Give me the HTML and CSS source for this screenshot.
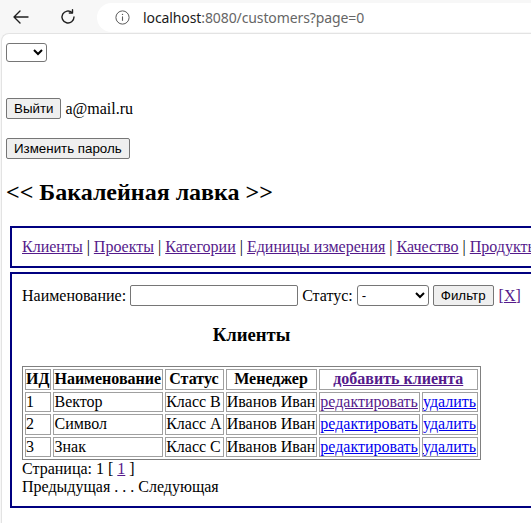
FILE: index.html
```html
<!DOCTYPE html>
<html lang="ru">
<head>
<meta charset="utf-8">
<title>Клиенты</title>
<link rel="stylesheet" href="styles.css">
</head>
<body>
<div class="chrome">
  <svg class="ic back" width="18" height="16" viewBox="0 0 18 16"><path d="M16 8H2M8 2L2 8l6 6" fill="none" stroke="#1f1f1f" stroke-width="1.4" stroke-linecap="round" stroke-linejoin="round"/></svg>
  <svg class="ic reload" width="18" height="18" viewBox="0 0 18 18"><path d="M15 9a6 6 0 1 1-2-4.5" fill="none" stroke="#1f1f1f" stroke-width="1.4" stroke-linecap="round"/><path d="M13.5 1.8v3.2h-3.2" fill="none" stroke="#1f1f1f" stroke-width="1.4" stroke-linecap="round" stroke-linejoin="round"/></svg>
  <div class="omnibox">
    <svg class="info" width="15" height="15" viewBox="0 0 15 15"><circle cx="7.5" cy="7.5" r="6.6" fill="none" stroke="#5b5b5b" stroke-width="1"/><path d="M7.5 6.4v4.4" stroke="#5b5b5b" stroke-width="1.1"/><circle cx="7.5" cy="4.4" r="0.7" fill="#5b5b5b"/></svg>
    <span class="url"><span class="host">localhost</span>:8080/customers?page=0</span>
  </div>
</div>
<div class="page">
  <select class="lang"><option></option></select>
  <div class="auth"><button class="btn">Выйти</button> <span>a@mail.ru</span></div>
  <div class="pwd"><button class="btn">Изменить пароль</button></div>
  <h2 class="title">&lt;&lt; Бакалейная лавка &gt;&gt;</h2>
  <div class="box nav">
    <a href="#" class="v">Клиенты</a> | <a href="#" class="v">Проекты</a> | <a href="#" class="v">Категории</a> | <a href="#" class="v">Единицы измерения</a> | <a href="#" class="v">Качество</a> | <a href="#" class="v">Продукты</a> | <a href="#" class="v">Заказы</a>
  </div>
  <div class="box main">
    <form class="filter">
      <label>Наименование:</label>
      <input type="text" class="name-in">
      <label>Статус:</label>
      <select class="status"><option>-</option></select>
      <button type="button" class="btn">Фильтр</button>
      <a href="#" class="v">[X]</a>
    </form>
    <table class="grid">
      <caption>Клиенты</caption>
      <tr>
        <th>ИД</th><th>Наименование</th><th>Статус</th><th>Менеджер</th><th colspan="2"><a href="#" class="v">добавить клиента</a></th>
      </tr>
      <tr><td>1</td><td>Вектор</td><td>Класс B</td><td>Иванов Иван</td><td><a href="#" class="v">редактировать</a></td><td><a href="#">удалить</a></td></tr>
      <tr><td>2</td><td>Символ</td><td>Класс A</td><td>Иванов Иван</td><td><a href="#">редактировать</a></td><td><a href="#">удалить</a></td></tr>
      <tr><td>3</td><td>Знак</td><td>Класс C</td><td>Иванов Иван</td><td><a href="#">редактировать</a></td><td><a href="#">удалить</a></td></tr>
    </table>
    <div class="pager">Страница: 1 [ <a href="#" class="v">1</a> ]</div>
    <div class="pager">Предыдущая . . . Следующая</div>
  </div>
</div>
</body>
</html>
```

FILE: styles.css
```css
html, body {
  margin: 0;
  padding: 0;
  overflow: hidden;
  background: #f7f7f7;
}
body {
  width: 531px;
  height: 523px;
  font-family: "Liberation Serif", "Times New Roman", serif;
  font-size: 16px;
  color: #000;
}
.chrome {
  height: 33px;
  display: flex;
  align-items: center;
  background: #f7f7f7;
}
.ic { flex: none; }
.back { margin-left: 12px; }
.reload { margin-left: 29px; }
.omnibox {
  margin-left: 20px;
  flex: 1;
  height: 29px;
  margin-top: 1px;
  background: #fff;
  border-radius: 15px 0 0 15px;
  display: flex;
  align-items: center;
}
.info { margin-left: 18px; }
.url {
  margin-left: 13px;
  font-family: "Noto Sans", "Open Sans", sans-serif;
  font-size: 14px;
  color: #666;
  letter-spacing: -0.1px;
}
.host { color: #1a1a1a; }
.page {
  background: #fff;
  border-top: 1px solid #e3e3e3;
  border-left: 1px solid #e3e3e3;
  border-top-left-radius: 8px;
  margin-left: 1px;
  height: 489px;
  padding: 8px 0 0 4px;
  overflow: hidden;
}
a { color: #0000ee; }
a.v { color: #551a8b; }
.btn, select, input {
  font-family: "Liberation Sans", Arial, sans-serif;
  font-size: 13.33px;
  color: #000;
}
.btn {
  background: #efefef;
  border: 1px solid #767676;
  border-radius: 2px;
  padding: 1px 7px;
  height: 21px;
  line-height: 17px;
}
select {
  border: 1px solid #767676;
  border-radius: 3px;
  background: #fff;
  height: 19px;
  padding: 0;
}
.lang {
  display: block;
  width: 41px;
  margin: 1px 0 0;
}
.auth {
  margin-top: 36px;
  display: flex;
  align-items: center;
  gap: 4px;
  height: 21px;
}
.pwd {
  margin-top: 19px;
  height: 21px;
}
.title {
  font-size: 24px;
  font-weight: bold;
  line-height: 28px;
  margin: 19px 0 20px;
}
.box {
  border: 2px solid #000080;
  padding: 10px;
  margin-left: 4px;
  width: 640px;
  white-space: nowrap;
}
.nav {
  line-height: 18px;
}
.main {
  margin-top: 4px;
  padding-bottom: 9px;
}
.filter {
  display: flex;
  align-items: center;
  height: 23px;
  margin: 0;
}
.filter label { margin-right: 4px; }
.name-in {
  width: 168px;
  height: 21px;
  box-sizing: border-box;
  border: 1px solid #767676;
  border-radius: 2px;
  padding: 1px 2px;
  margin: 0 4px 0 0;
}
.status {
  width: 72px;
  height: 21px;
  margin-right: 4px;
}
.filter .btn { margin-right: 5px; }
.grid {
  border: 1px solid #808080;
  border-spacing: 2px;
}
.grid caption {
  font-size: 18.72px;
  font-weight: bold;
  line-height: 22px;
  padding: 17px 0 20px;
}
.grid th, .grid td {
  border: 1px solid #a0a0a0;
  padding: 0 1px 0 0;
  line-height: 18.5px;
  text-align: left;
}
.grid th { text-align: center; }
.grid th:first-child, .grid th:nth-child(2) { text-align: left; }
.pager { line-height: 18.4px; }
```
